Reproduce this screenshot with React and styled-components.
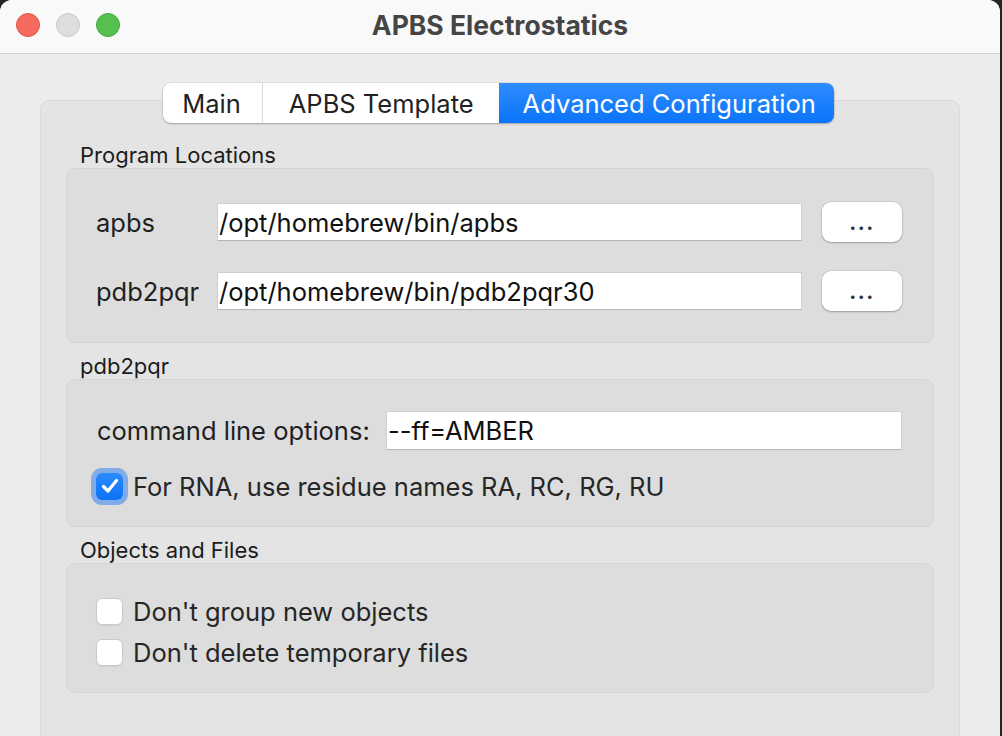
import React from "react";
import styled, { createGlobalStyle } from "styled-components";

const GlobalStyle = createGlobalStyle`
  html, body {
    margin: 0;
    padding: 0;
    background: #262626;
    overflow: hidden;
  }
  body {
    font-family: Inter, "Liberation Sans", sans-serif;
  }
`;

const App = () => {
  return (
    <>
      <GlobalStyle />
      <Window>
        <TitleBar>
          <Lights>
            <Light color="#f46a5e" border="#de5548" />
            <Light color="#dedede" border="#c9c9c9" />
            <Light color="#56c150" border="#45a83f" />
          </Lights>
          <Title>APBS Electrostatics</Title>
          <span />
        </TitleBar>

        <Body>
          <Tabs>
            <Tab pad="0 21px 0 19px">Main</Tab>
            <Tab pad="0 25px 0 26px" divider>
              APBS Template
            </Tab>
            <Tab pad="0 18px 0 24px" active>
              Advanced Configuration
            </Tab>
          </Tabs>

          <Pane>
            <Section>
              <GroupTitle>Program Locations</GroupTitle>
              <GroupBox pad="33px 31px 31px 29px">
                <PathRow>
                  <Label>apbs</Label>
                  <TextField>/opt/homebrew/bin/apbs</TextField>
                  <DotsButton>...</DotsButton>
                </PathRow>
                <PathRow>
                  <Label>pdb2pqr</Label>
                  <TextField>/opt/homebrew/bin/pdb2pqr30</TextField>
                  <DotsButton>...</DotsButton>
                </PathRow>
              </GroupBox>
            </Section>

            <Section>
              <GroupTitle>pdb2pqr</GroupTitle>
              <GroupBox pad="31px 31px 25px 25px" gap="21px">
                <OptionsRow>
                  <Label>command line options:</Label>
                  <TextField tall>--ff=AMBER</TextField>
                </OptionsRow>
                <CheckRow>
                  <CheckBox checked focused>
                    <svg width="20" height="18" viewBox="0 0 20 18">
                      <path
                        d="M3.5 9.5 L8 14 L16.5 3.5"
                        fill="none"
                        stroke="#fff"
                        strokeWidth="3.2"
                        strokeLinecap="round"
                        strokeLinejoin="round"
                      />
                    </svg>
                  </CheckBox>
                  <CheckText>For RNA, use residue names RA, RC, RG, RU</CheckText>
                </CheckRow>
              </GroupBox>
            </Section>

            <Section>
              <GroupTitle>Objects and Files</GroupTitle>
              <GroupBox pad="32px 31px 25px 29px">
                <CheckList>
                  <CheckRow>
                    <CheckBox />
                    <CheckText>Don't group new objects</CheckText>
                  </CheckRow>
                  <CheckRow>
                    <CheckBox />
                    <CheckText>Don't delete temporary files</CheckText>
                  </CheckRow>
                </CheckList>
              </GroupBox>
            </Section>
          </Pane>
        </Body>
      </Window>
    </>
  );
};

export default App;

const Window = styled.div`
  width: 1000px;
  height: 736px;
  background: #ececec;
  border-radius: 12px 12px 0 0;
  overflow: hidden;
`;

const TitleBar = styled.div`
  height: 54px;
  display: grid;
  grid-template-columns: 1fr auto 1fr;
  align-items: center;
  background: #f9f9f9;
  border-bottom: 1px solid #d2d2d2;
  padding-bottom: 4px;
  box-sizing: border-box;
`;

const Lights = styled.div`
  display: flex;
  gap: 16px;
  padding-left: 16px;
`;

const Light = styled.span`
  width: 22px;
  height: 22px;
  border-radius: 50%;
  background: ${(p) => p.color};
  border: 1px solid ${(p) => p.border};
`;

const Title = styled.div`
  font-size: 26.5px;
  font-weight: 700;
  color: #454545;
`;

const Body = styled.div`
  padding: 29px 40px 0 40px;
  display: flex;
  flex-direction: column;
  align-items: center;
`;

const Tabs = styled.div`
  display: flex;
  height: 40px;
  margin-bottom: -23px;
  margin-left: -3px;
  position: relative;
  z-index: 1;
  background: #fff;
  border-radius: 8px;
  box-shadow: 0 0 0 0.5px rgba(0, 0, 0, 0.12), 0 1px 2px rgba(0, 0, 0, 0.25);
  overflow: hidden;
`;

const Tab = styled.div`
  display: flex;
  align-items: center;
  padding: ${(p) => p.pad};
  font-size: 25.5px;
  color: ${(p) => (p.active ? "#fff" : "#222")};
  background: ${(p) =>
    p.active ? "linear-gradient(#2f8cff, #0a74f8)" : "transparent"};
  border-left: ${(p) => (p.divider ? "1.5px solid #dadada" : "none")};
`;

const Pane = styled.div`
  align-self: stretch;
  height: 700px;
  background: #e4e4e4;
  border: 1px solid #dadada;
  border-radius: 9px;
  padding: 41px 25px 0 25px;
  display: flex;
  flex-direction: column;
  gap: 10px;
`;

const Section = styled.div`
  display: flex;
  flex-direction: column;
`;

const GroupTitle = styled.div`
  font-size: 22px;
  line-height: 26px;
  color: #1c1c1c;
  padding-left: 14px;
`;

const GroupBox = styled.div`
  background: #dddddd;
  border: 1px solid #d4d4d4;
  border-radius: 9px;
  padding: ${(p) => p.pad};
  display: flex;
  flex-direction: column;
  gap: ${(p) => p.gap || "19px"};
`;

const PathRow = styled.div`
  display: grid;
  grid-template-columns: 101px 1fr 80px;
  column-gap: 20px;
  align-items: center;
  & + & {
    margin-top: 10px;
  }
`;

const OptionsRow = styled.div`
  display: grid;
  grid-template-columns: 289px 1fr;
  align-items: center;
  padding-left: 5px;
`;

const Label = styled.div`
  font-size: 25.5px;
  color: #1f1f1f;
  white-space: nowrap;
`;

const TextField = styled.div`
  height: ${(p) => (p.tall ? "39px" : "38px")};
  box-sizing: border-box;
  background: #fff;
  border: 1px solid #cfcfcf;
  border-bottom: 1.5px solid #b4b4b4;
  font-size: 25.5px;
  color: #111;
  display: flex;
  align-items: center;
  padding-left: 1px;
  white-space: nowrap;
`;

const DotsButton = styled.div`
  height: 40px;
  box-sizing: border-box;
  background: #fff;
  border-radius: 9px;
  box-shadow: 0 0 0 0.5px rgba(0, 0, 0, 0.12), 0 1px 2px rgba(0, 0, 0, 0.25);
  display: flex;
  align-items: center;
  justify-content: center;
  font-size: 21px;
  font-weight: 700;
  letter-spacing: 1.5px;
  color: #333;
  padding-top: 1px;
`;

const CheckList = styled.div`
  display: flex;
  flex-direction: column;
  gap: 11px;
`;

const CheckRow = styled.div`
  display: flex;
  align-items: center;
  gap: 10px;
  height: 30px;
`;

const CheckBox = styled.span`
  width: 27px;
  height: 27px;
  box-sizing: border-box;
  border-radius: 6px;
  flex: none;
  display: flex;
  align-items: center;
  justify-content: center;
  margin-left: ${(p) => (p.focused ? "4px" : "0")};
  background: ${(p) =>
    p.checked ? "linear-gradient(#2b8aff, #0b73f6)" : "#fff"};
  border: ${(p) => (p.checked ? "none" : "1px solid #c9c9c9")};
  box-shadow: ${(p) =>
    p.focused
      ? "0 0 0 5px rgba(70, 140, 240, 0.6)"
      : "0 1px 1px rgba(0,0,0,0.06)"};
`;

const CheckText = styled.div`
  font-size: 25.5px;
  color: #262626;
  white-space: nowrap;
`;
